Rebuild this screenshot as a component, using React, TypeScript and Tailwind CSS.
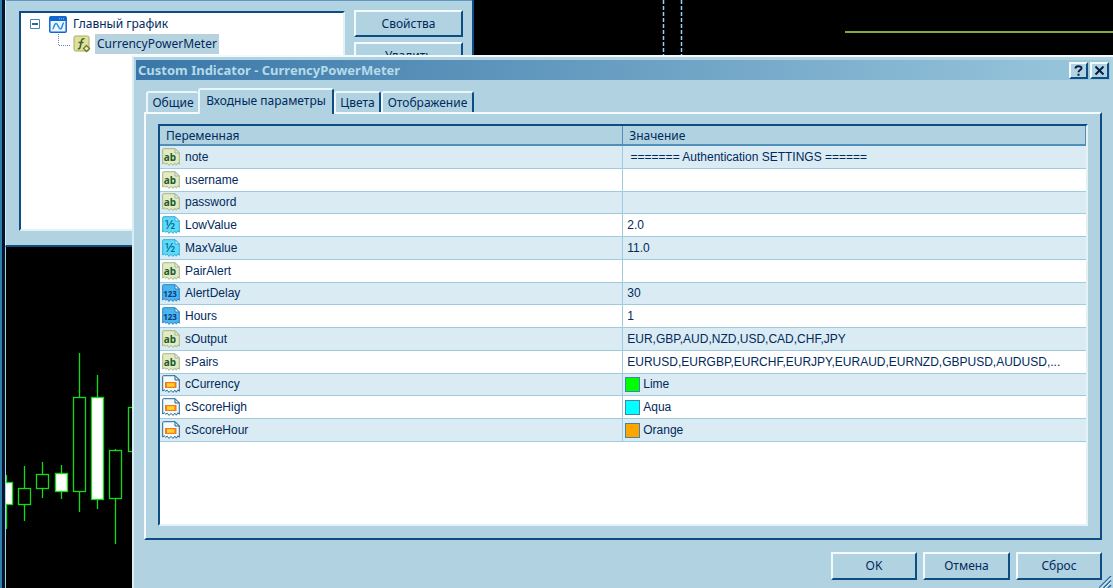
import React from 'react';

type ParamKind = 'string' | 'double' | 'int' | 'color';

interface Param {
    name: string;
    kind: ParamKind;
    value: string;
    swatch?: string;
}

const PARAMS: Param[] = [
    { name: 'note', kind: 'string', value: '\u00a0======= Authentication SETTINGS ======' },
    { name: 'username', kind: 'string', value: '' },
    { name: 'password', kind: 'string', value: '' },
    { name: 'LowValue', kind: 'double', value: '2.0' },
    { name: 'MaxValue', kind: 'double', value: '11.0' },
    { name: 'PairAlert', kind: 'string', value: '' },
    { name: 'AlertDelay', kind: 'int', value: '30' },
    { name: 'Hours', kind: 'int', value: '1' },
    { name: 'sOutput', kind: 'string', value: 'EUR,GBP,AUD,NZD,USD,CAD,CHF,JPY' },
    { name: 'sPairs', kind: 'string', value: 'EURUSD,EURGBP,EURCHF,EURJPY,EURAUD,EURNZD,GBPUSD,AUDUSD,...' },
    { name: 'cCurrency', kind: 'color', value: 'Lime', swatch: 'bg-[#00ff00]' },
    { name: 'cScoreHigh', kind: 'color', value: 'Aqua', swatch: 'bg-[#00ffff]' },
    { name: 'cScoreHour', kind: 'color', value: 'Orange', swatch: 'bg-[#ffa500]' },
];

const KIND_STYLE = {
    string: { fill: '#e3ebc3', stroke: '#a3b58c', text: '#1f5a2c', label: 'ab', size: 10, weight: 700 },
    double: { fill: '#5cdcf8', stroke: '#35aad4', text: '#0a6a9c', label: '½', size: 13, weight: 500 },
    int: { fill: '#4db4f0', stroke: '#2385c8', text: '#053f7c', label: '123', size: 8, weight: 700 },
    color: { fill: '#f4f9fc', stroke: '#1f6796', text: '', label: '', size: 0, weight: 400 },
};

const KindIcon: React.FC<{ kind: ParamKind }> = ({ kind }) => {
    const s = KIND_STYLE[kind];
    return (
        <svg width="18" height="18" viewBox="0 0 18 18" className="shrink-0" aria-hidden="true">
            <path
                d="M.7 1.5Q.7.7 1.5.7H13L17.3 5V16.3L15.8 14.8 14.3 17.2 12.8 15.2 11 17.4 9 15.4 7 17.4 5.2 15.2 3.7 16.2 2.2 14.8.7 16Z"
                fill={s.fill}
                stroke={s.stroke}
            />
            <path d="M13 .7V5H17.3Z" fill="#e6f3f8" stroke={s.stroke} />
            {kind === 'color' ? (
                <>
                    <rect x="3" y="7" width="11.5" height="6" fill="#f47a20" />
                    <rect x="5" y="8.2" width="7.5" height="3.6" fill="#ffd32a" />
                </>
            ) : (
                <text x="8" y="12.5" textAnchor="middle" fontSize={s.size} fontWeight={s.weight} fontFamily="Noto Sans, sans-serif" fill={s.text}>
                    {s.label}
                </text>
            )}
        </svg>
    );
};

interface Candle {
    x: number;
    high: number;
    open: number;
    close: number;
    low: number;
    filled?: boolean;
}

const CANDLES: Candle[] = [
    { x: 6, high: 475, open: 482, close: 504, low: 529, filled: true },
    { x: 24, high: 466, open: 488, close: 504, low: 521 },
    { x: 42, high: 462, open: 474, close: 488, low: 498 },
    { x: 61, high: 465, open: 473, close: 491, low: 499, filled: true },
    { x: 79, high: 353, open: 397, close: 491, low: 512 },
    { x: 97, high: 375, open: 397, close: 499, low: 509, filled: true },
    { x: 115, high: 449, open: 450, close: 498, low: 544 },
    { x: 134, high: 407, open: 407, close: 451, low: 451 },
];

const Chart: React.FC = () => (
    <div className="absolute inset-0">
        <svg className="absolute left-0 top-0 h-full w-full" aria-hidden="true">
            <g stroke="#10dc18" strokeWidth="1.3">
                {CANDLES.map(c => (
                    <g key={c.x}>
                        <path d={`M${c.x + 0.5} ${c.high}V${c.low}`} />
                        <rect
                            x={c.x - 5.5}
                            y={c.open + 0.5}
                            width="12"
                            height={c.close - c.open}
                            fill={c.filled ? '#ffffff' : '#000000'}
                        />
                    </g>
                ))}
            </g>
            <path d="M663.5 0V60M681.5 0V60" stroke="#8fd0f5" strokeWidth="1.5" strokeDasharray="4 2" />
            <path d="M845 32H4000" stroke="#86a93c" strokeWidth="2" />
        </svg>
        <div className="absolute inset-y-0 left-0 w-[6px] border-l-2 border-r border-l-[#2f7fae] border-r-[#a9d0e3] bg-[#04142b]" />
    </div>
);

const RAISED = 'border-2 border-t-[#f2fafd] border-l-[#f2fafd] border-r-[#0e4c84] border-b-[#0e4c84] bg-[#b1d2e1]';
const SUNKEN = 'border-2 border-t-[#0e4c84] border-l-[#0e4c84] border-r-[#e4f2f8] border-b-[#e4f2f8]';

const PushButton: React.FC<{ className: string; children: React.ReactNode }> = ({ className, children }) => (
    <button type="button" className={`${RAISED} ${className} flex items-center justify-center`}>
        {children}
    </button>
);

const IndicatorsWindow: React.FC = () => (
    <section className="absolute -top-1 left-[5px] flex h-[251px] w-[469px] gap-[9px] border-b-2 border-l border-r-2 border-b-[#0e4c84] border-l-[#d8ecf5] border-r-[#0e4c84] bg-[#b1d2e1] pt-[14px] pr-[9px] pb-[14px] pl-[13px]">
        <div className="absolute inset-x-0 top-0 h-[5px] bg-[#5f97c0]" />
        <ul className={`${SUNKEN} mt-px flex-1 bg-white pt-px pl-2`}>
            <li className="flex h-5 items-center">
                <svg width="12" height="12" viewBox="0 0 12 12" aria-hidden="true">
                    <path d="M1.5 1.5H10.5V10.5H1.5Z" fill="#fff" stroke="#4a87ac" />
                    <path d="M3 6H9" stroke="#0b3b70" strokeWidth="1.6" />
                </svg>
                <svg width="18" height="17" viewBox="0 0 18 17" className="ml-2" aria-hidden="true">
                    <rect x=".8" y=".8" width="16.4" height="15.4" rx="1" fill="#eaf6fd" stroke="#1267cf" strokeWidth="1.5" />
                    <path d="M1 1H17V5H1Z" fill="#1267cf" />
                    <path d="M10 2.8H15" stroke="#8fc6f5" strokeDasharray="1 1" />
                    <path d="M3.5 13C5 13 5 7.5 7 7.5S9.5 13 11.5 13 13 7 15 7" fill="none" stroke="#2e8ddb" strokeWidth="1.5" />
                </svg>
                <span className="ml-[6px]">Главный график</span>
            </li>
            <li className="flex h-5 items-center">
                <svg width="16" height="20" viewBox="0 0 16 20" className="ml-[28px]" aria-hidden="true">
                    <path d="M1.5 0V11.5H14" fill="none" stroke="#5c92b0" strokeDasharray="1 1" />
                </svg>
                <svg width="18" height="18" viewBox="0 0 18 18" aria-hidden="true">
                    <rect x="1" y="1" width="15" height="15" rx="1.5" fill="#dfe0a0" stroke="#a8a95a" />
                    <path d="M11.5 4C9 3 8.5 5 8.2 7L7.2 12C7 13.5 6 14 4.8 13.5M5.5 7.5H10.5" fill="none" stroke="#4b6424" strokeWidth="1.6" />
                    <path d="M13.5 10.5L16.5 13.5 13.5 16.5 10.5 13.5Z" fill="#ecefad" stroke="#6c7a2c" strokeWidth="1.3" />
                </svg>
                <span className="ml-1 bg-[#b7d3e0] px-[2px] leading-5">CurrencyPowerMeter</span>
            </li>
        </ul>
        <div className="flex w-[109px] flex-col gap-[5px]">
            <PushButton className="h-[27px] w-full">Свойства</PushButton>
            <PushButton className="h-[27px] w-full">Удалить</PushButton>
        </div>
    </section>
);

const TitleBar: React.FC = () => (
    <header className="flex h-5 shrink-0 items-center gap-[2px] bg-linear-to-r from-[#3a77a8] to-[#9ac8dd] pr-px pl-[2px]">
        <h1 className="flex-1 font-['Noto_Sans'] text-[13px] font-bold text-[#b4dbea]">Custom Indicator - CurrencyPowerMeter</h1>
        <button type="button" aria-label="Help" className={`${RAISED} flex h-[17px] w-[19px] items-center justify-center`}>
            <svg width="11" height="11" viewBox="0 0 11 11" aria-hidden="true">
                <path d="M2.5 3.5C2.5 .5 8.5 .5 8.5 3.2 8.5 5 5.5 5 5.5 7.3M5.5 8.8V10.8" fill="none" stroke="#051f45" strokeWidth="2" />
            </svg>
        </button>
        <button type="button" aria-label="Close" className={`${RAISED} flex h-[17px] w-[19px] items-center justify-center`}>
            <svg width="11" height="11" viewBox="0 0 11 11" aria-hidden="true">
                <path d="M1.5 1.5L9.5 9.5M9.5 1.5L1.5 9.5" stroke="#051f45" strokeWidth="2" />
            </svg>
        </button>
    </header>
);

const TABS = [
    { label: 'Общие', width: 'w-[52px]', edge: 'border-r-0' },
    { label: 'Входные параметры', width: 'w-[136px]', edge: 'border-r-2', active: true },
    { label: 'Цвета', width: 'w-[47px]', edge: 'border-r-2' },
    { label: 'Отображение', width: 'w-[93px]', edge: 'border-r-2' },
];

const Tabs: React.FC = () => (
    <div role="tablist" className="flex h-6 items-end pl-[2px]">
        {TABS.map(tab => (
            <button
                key={tab.label}
                type="button"
                role="tab"
                aria-selected={!!tab.active}
                className={`${tab.width} ${tab.edge} ${
                    tab.active ? 'z-10 -mb-[2px] h-[26px] pb-[2px]' : 'h-[21px]'
                } flex items-center justify-center rounded-t-[3px] border-t-2 border-l-2 border-t-[#eaf6fb] border-l-[#eaf6fb] border-r-[#0e4c84] bg-[#b1d2e1] whitespace-nowrap`}
            >
                {tab.label}
            </button>
        ))}
    </div>
);

const ParamTable: React.FC = () => (
    <div className={`${SUNKEN} flex-1 bg-white`}>
        <table className="h-[316px] w-full table-fixed border-collapse text-left">
            <thead>
                <tr>
                    <th className="h-[19px] w-1/2 border-r border-b-2 border-[#4f8fba] bg-[#b1d2e1] p-0 pt-px pl-[6px] font-normal">Переменная</th>
                    <th className="h-[19px] border-r border-b-2 border-[#4f8fba] bg-[#b1d2e1] p-0 pt-px pl-[6px] font-normal">Значение</th>
                </tr>
            </thead>
            <tbody className="font-['Liberation_Sans',sans-serif] text-[12px]">
                {PARAMS.map(param => (
                    <tr key={param.name} className="border-b border-[#9fcbe0] odd:bg-[#dbebf3]">
                        <td className="border-r border-[#9fcbe0] p-0">
                            <div className="flex items-center gap-[5px] pl-[2px]">
                                <KindIcon kind={param.kind} />
                                {param.name}
                            </div>
                        </td>
                        <td className="p-0">
                            <div className={`flex items-center overflow-hidden whitespace-nowrap ${param.swatch ? 'gap-[3px] pl-[2px]' : 'pl-1'}`}>
                                {param.swatch && <span className={`${param.swatch} size-[15px] border border-[#3f86a8]`} />}
                                {param.value}
                            </div>
                        </td>
                    </tr>
                ))}
            </tbody>
        </table>
    </div>
);

const IndicatorDialog: React.FC = () => (
    <section
        role="dialog"
        aria-label="Custom Indicator - CurrencyPowerMeter"
        className="absolute top-[55px] right-0 bottom-0 left-[132px] flex flex-col border-t-2 border-l-2 border-t-[#f2fafd] border-l-[#d9edf5] bg-[#b1d2e1] pt-[3px] pr-[3px] pl-[2px]"
    >
        <TitleBar />
        <div className="flex flex-1 flex-col px-2 pt-2">
            <Tabs />
            <div role="tabpanel" className={`${RAISED} flex flex-1 flex-col px-3 pt-[10px] pb-3`}>
                <ParamTable />
            </div>
            <footer className="flex justify-end gap-[6px] pt-3 pb-2">
                <PushButton className="h-7 w-[86px]">OK</PushButton>
                <PushButton className="h-7 w-[87px]">Отмена</PushButton>
                <PushButton className="h-7 w-[86px]">Сброс</PushButton>
            </footer>
        </div>
        <svg width="13" height="12" viewBox="0 0 13 12" className="absolute right-px bottom-0" aria-hidden="true">
            <path d="M0 12L12 0M4.5 12L12 4.5M9 12L12 9" stroke="#2b6fa3" strokeWidth="1.5" />
            <path d="M1.5 12L12 1.5M6 12L12 6" stroke="#eef8fc" />
        </svg>
    </section>
);

export default function App() {
    return (
        <main className="relative min-h-screen overflow-hidden bg-black font-['Noto_Sans',sans-serif] text-[12px] leading-4 text-[#002a5c]">
            <Chart />
            <IndicatorsWindow />
            <IndicatorDialog />
        </main>
    );
}
